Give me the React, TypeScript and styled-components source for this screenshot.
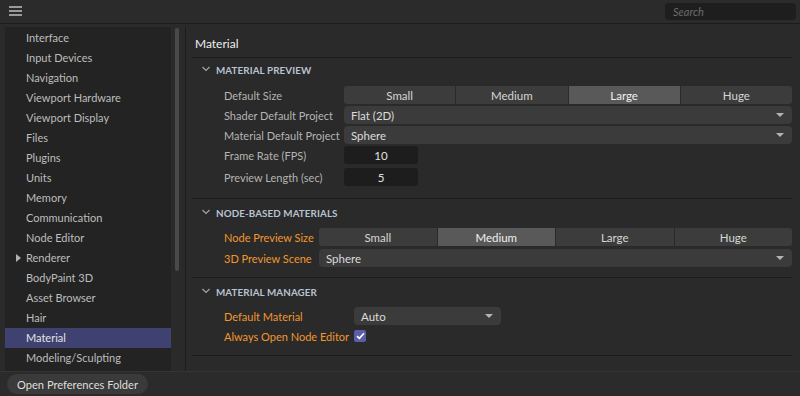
import React from "react";
import styled, { createGlobalStyle } from "styled-components";

const Global = createGlobalStyle`
  html, body { margin: 0; padding: 0; background: #2a2a2a; }
  body { font-family: Lato, "Liberation Sans", sans-serif; font-size: 11px; }
  * { box-sizing: border-box; }
`;

const Frame = styled.div`
  width: 800px;
  height: 396px;
  display: flex;
  flex-direction: column;
  background: #2a2a2a;
  overflow: hidden;
  color: #c4c4c4;
`;

const TopBar = styled.div`
  height: 24px;
  flex: none;
  display: flex;
  align-items: center;
  justify-content: space-between;
  padding: 0 4px 0 9px;
  background: #2b2b2b;
  border-bottom: 1px solid #1c1c1c;
`;

const Hamburger = styled.div`
  width: 13px;
  display: flex;
  flex-direction: column;
  gap: 2px;
  margin-top: -1px;
  span { display: block; height: 2px; background: #9a9a9a; }
`;

const SearchBox = styled.div`
  width: 131px;
  height: 17px;
  margin-top: -1px;
  border-radius: 4px;
  background: #1e1e1e;
  color: #6b6b6b;
  font-style: italic;
  font-size: 11px;
  line-height: 17px;
  padding-left: 8px;
`;

const Body = styled.div`
  flex: 1;
  min-height: 0;
  display: flex;
  padding-top: 3px;
`;

const SideWrap = styled.div`
  width: 186px;
  flex: none;
  display: flex;
  padding-left: 5px;
  border-right: 1px solid #1c1c1c;
`;

const SideList = styled.div`
  width: 167px;
  background: #232323;
  padding-top: 1px;
  display: flex;
  flex-direction: column;
`;

const SideItem = styled.div<{ $selected?: boolean }>`
  height: 20px;
  flex: none;
  display: flex;
  align-items: center;
  padding-left: 21px;
  padding-bottom: 1px;
  font-size: 11px;
  position: relative;
  color: ${(p) => (p.$selected ? "#e4e4e4" : "#bdbdbd")};
  background: ${(p) => (p.$selected ? "#3f4170" : "transparent")};
`;

const Arrow = styled.span`
  position: absolute;
  left: 11px;
  top: 6px;
  width: 0;
  height: 0;
  border-top: 4px solid transparent;
  border-bottom: 4px solid transparent;
  border-left: 5px solid #b0b0b0;
`;

const ScrollTrack = styled.div`
  width: 14px;
  padding: 1px 0 0 4px;
`;

const ScrollThumb = styled.div`
  width: 4px;
  height: 243px;
  border-radius: 2px;
  background: #4a4a4a;
`;

const Main = styled.div`
  flex: 1;
  display: flex;
  flex-direction: column;
  padding: 0 8px 0 6px;
`;

const Heading = styled.div`
  height: 31px;
  flex: none;
  display: flex;
  align-items: center;
  padding-left: 3px;
  padding-top: 3px;
  font-size: 12px;
  color: #efefef;
  border-bottom: 1px solid #1c1c1c;
`;

const Section = styled.div<{ $pad?: number }>`
  border-bottom: 1px solid #1c1c1c;
  padding-bottom: ${(p) => p.$pad ?? 10}px;
`;

const SectionHead = styled.div<{ $first?: boolean }>`
  height: 28px;
  display: flex;
  align-items: center;
  gap: 6px;
  padding-left: 10px;
  padding-bottom: ${(p) => (p.$first ? 5 : 0)}px;
  margin-bottom: ${(p) => (p.$first ? -1 : 0)}px;
  font-size: 9.8px;
  font-weight: 700;
  letter-spacing: 0.1px;
  color: #b8c2d2;
`;

const Chevron = styled.svg`
  width: 8px;
  height: 6px;
  margin-top: -2px;
`;

const Rows = styled.div<{ $label: number }>`
  display: grid;
  grid-template-columns: ${(p) => p.$label}px 1fr;
  row-gap: 2px;
  padding-left: 32px;
  padding-top: 1px;
`;

const Label = styled.div<{ $accent?: boolean; $push?: number }>`
  height: 18px;
  display: flex;
  align-items: center;
  margin-top: ${(p) => p.$push ?? 0}px;
  color: ${(p) => (p.$accent ? "#f2962e" : "#b4b4b4")};
  white-space: nowrap;
  font-size: 11px;
`;

const Cell = styled.div<{ $push?: number }>`
  height: 18px;
  display: flex;
  align-items: center;
  margin-top: ${(p) => p.$push ?? 0}px;
`;

const Segmented = styled.div`
  flex: 1;
  height: 18px;
  display: flex;
  gap: 1px;
  border-radius: 3px;
  overflow: hidden;
`;

const Seg = styled.div<{ $active?: boolean }>`
  flex: 1;
  display: flex;
  align-items: center;
  justify-content: center;
  font-size: 11.5px;
  background: ${(p) => (p.$active ? "#595959" : "#3c3c3c")};
  color: ${(p) => (p.$active ? "#f0f0f0" : "#d6d6d6")};
`;

const Dropdown = styled.div<{ $width?: number }>`
  ${(p) => (p.$width ? `width: ${p.$width}px;` : "flex: 1;")}
  height: 18px;
  display: flex;
  align-items: center;
  justify-content: space-between;
  padding: 0 8px 0 7px;
  border-radius: 4px;
  background: #3b3b3b;
  color: #dcdcdc;
  font-size: 11.5px;
`;

const Caret = styled.span`
  width: 0;
  height: 0;
  border-left: 4px solid transparent;
  border-right: 4px solid transparent;
  border-top: 4px solid #b4b4b4;
`;

const NumberBox = styled.div`
  width: 74px;
  height: 18px;
  display: flex;
  align-items: center;
  justify-content: center;
  border-radius: 3px;
  background: #1d1d1d;
  color: #e0e0e0;
  font-size: 11.5px;
`;

const Check = styled.div`
  width: 12px;
  height: 12px;
  border-radius: 2px;
  background: #5c5cab;
  display: flex;
  align-items: center;
  justify-content: center;
`;

const BottomBar = styled.div`
  height: 25px;
  flex: none;
  display: flex;
  align-items: center;
  padding-left: 7px;
  background: #2b2b2b;
  border-top: 1px solid #353535;
`;

const PillButton = styled.div`
  height: 20px;
  padding: 0 10px;
  display: flex;
  align-items: center;
  border-radius: 10px;
  background: #3a3a3a;
  color: #dedede;
  font-size: 11.1px;
`;

const sideItems = [
  "Interface",
  "Input Devices",
  "Navigation",
  "Viewport Hardware",
  "Viewport Display",
  "Files",
  "Plugins",
  "Units",
  "Memory",
  "Communication",
  "Node Editor",
  "Renderer",
  "BodyPaint 3D",
  "Asset Browser",
  "Hair",
  "Material",
  "Modeling/Sculpting",
];

const SectionTitle = ({ children, first }: { children: React.ReactNode; first?: boolean }) => (
  <SectionHead $first={first}>
    <Chevron viewBox="0 0 8 6">
      <path d="M0.5 1 L4 4.5 L7.5 1" fill="none" stroke="#a8a8a8" strokeWidth="1.1" />
    </Chevron>
    {children}
  </SectionHead>
);

const Segs = ({ active }: { active: string }) => (
  <Segmented>
    {["Small", "Medium", "Large", "Huge"].map((s) => (
      <Seg key={s} $active={s === active}>
        {s}
      </Seg>
    ))}
  </Segmented>
);

export default function App() {
  return (
    <Frame>
      <Global />
      <TopBar>
        <Hamburger>
          <span />
          <span />
          <span />
        </Hamburger>
        <SearchBox>Search</SearchBox>
      </TopBar>
      <Body>
        <SideWrap>
          <SideList>
            {sideItems.map((it) => (
              <SideItem key={it} $selected={it === "Material"}>
                {it === "Renderer" && <Arrow />}
                {it}
              </SideItem>
            ))}
          </SideList>
          <ScrollTrack>
            <ScrollThumb />
          </ScrollTrack>
        </SideWrap>
        <Main>
          <Heading>Material</Heading>
          <Section $pad={12}>
            <SectionTitle first>MATERIAL PREVIEW</SectionTitle>
            <Rows $label={120}>
              <Label>Default Size</Label>
              <Cell>
                <Segs active="Large" />
              </Cell>
              <Label>Shader Default Project</Label>
              <Cell>
                <Dropdown>
                  Flat (2D)
                  <Caret />
                </Dropdown>
              </Cell>
              <Label>Material Default Project</Label>
              <Cell>
                <Dropdown>
                  Sphere
                  <Caret />
                </Dropdown>
              </Cell>
              <Label>Frame Rate (FPS)</Label>
              <Cell>
                <NumberBox>10</NumberBox>
              </Cell>
              <Label $push={2}>Preview Length (sec)</Label>
              <Cell $push={2}>
                <NumberBox>5</NumberBox>
              </Cell>
            </Rows>
          </Section>
          <Section>
            <SectionTitle>NODE-BASED MATERIALS</SectionTitle>
            <Rows $label={95}>
              <Label $accent>Node Preview Size</Label>
              <Cell>
                <Segs active="Medium" />
              </Cell>
              <Label $accent $push={1}>3D Preview Scene</Label>
              <Cell $push={1}>
                <Dropdown>
                  Sphere
                  <Caret />
                </Dropdown>
              </Cell>
            </Rows>
          </Section>
          <Section>
            <SectionTitle>MATERIAL MANAGER</SectionTitle>
            <Rows $label={130}>
              <Label $accent>Default Material</Label>
              <Cell>
                <Dropdown $width={147}>
                  Auto
                  <Caret />
                </Dropdown>
              </Cell>
              <Label $accent>Always Open Node Editor</Label>
              <Cell>
                <Check>
                  <svg width="9" height="8" viewBox="0 0 9 8">
                    <path d="M1 4.2 L3.4 6.4 L8 1.2" fill="none" stroke="#ffffff" strokeWidth="1.6" />
                  </svg>
                </Check>
              </Cell>
            </Rows>
          </Section>
        </Main>
      </Body>
      <BottomBar>
        <PillButton>Open Preferences Folder</PillButton>
      </BottomBar>
    </Frame>
  );
}
